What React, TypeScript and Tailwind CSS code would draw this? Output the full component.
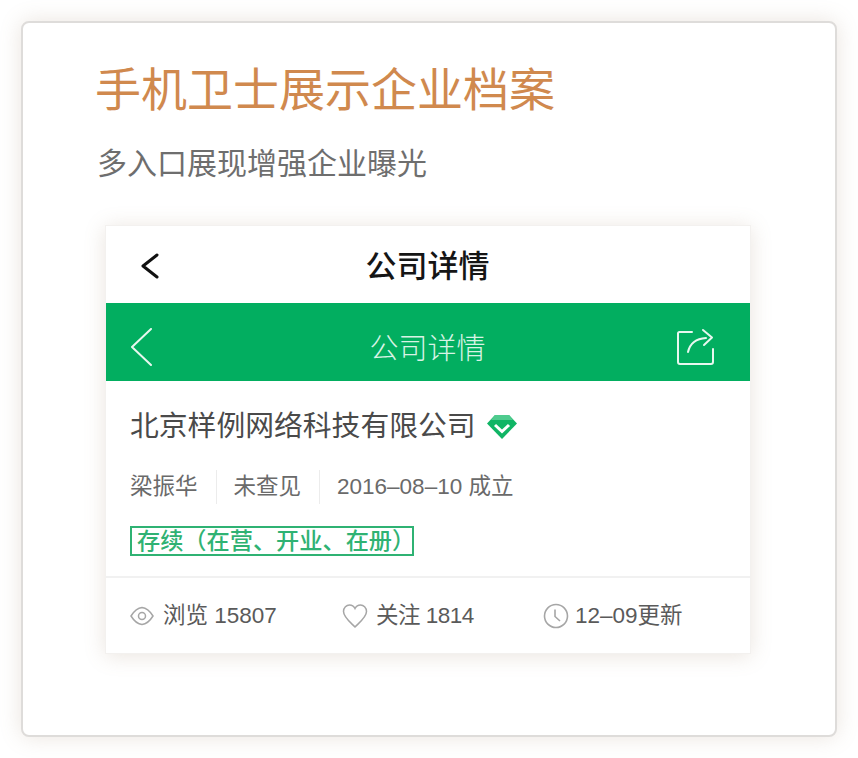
const cjk = "font-['Liberation_Sans','Noto_Sans_CJK_SC',sans-serif]";

function ShareIcon() {
  return (
    <svg width="40" height="38" viewBox="0 0 40 38" fill="none" stroke="#e8f7ef" strokeWidth="2" strokeLinecap="round" strokeLinejoin="round">
      <path d="M16 4H3.500Q2 4 2 5.500V34Q2 36 4 36H35Q37 36 37 34V21" />
      <path d="M12 24Q15 11 30 10" />
      <path d="M27 2L36 9.500L28 17" />
    </svg>
  );
}

function Diamond() {
  return (
    <svg width="32" height="26" viewBox="0 0 32 26">
      <path d="M9 1H23L31 9.500L16 25L1 9.500Z" fill="#10b565" />
      <path d="M9 11L16 17.500L23 11" fill="none" stroke="#fff" strokeWidth="3" />
      <path d="M9 1H23L27 6H5Z" fill="#4fcb8e" />
    </svg>
  );
}

function EyeIcon() {
  return (
    <svg width="24" height="20" viewBox="0 0 24 20" fill="none" stroke="#a6a6a6" strokeWidth="1.500">
      <path d="M1 10Q6 2 12 1.500Q18 2 23 10Q18 18 12 18.500Q6 18 1 10Z" />
      <circle cx="12" cy="10" r="3.500" />
    </svg>
  );
}

function HeartIcon() {
  return (
    <svg width="26" height="24" viewBox="0 0 26 24" fill="none" stroke="#a6a6a6" strokeWidth="1.500">
      <path d="M13 23C8 18 1.500 13 1.500 7.500C1.500 3.500 4.500 1 7.500 1C10 1 12 2.500 13 4.500C14 2.500 16 1 18.500 1C21.500 1 24.500 3.500 24.500 7.500C24.500 13 18 18 13 23Z" />
    </svg>
  );
}

function ClockIcon() {
  return (
    <svg width="26" height="26" viewBox="0 0 26 26" fill="none" stroke="#a6a6a6" strokeWidth="1.600">
      <circle cx="13" cy="13" r="11.500" />
      <path d="M12 6.500V13.500L17 18" />
    </svg>
  );
}

export default function App() {
  return (
    <div className={`w-[858px] h-[758px] p-[21px] bg-white ${cjk}`}>
      <div className="h-[716px] rounded-lg border-2 border-[#dedcda] bg-white shadow-[0_0_22px_rgba(150,120,90,0.2)] pl-[72px] pt-[40px]">
        <h1 className="text-[46px] leading-[54px] font-normal text-[#d0894e]">手机卫士展示企业档案</h1>
        <p className="text-[30px] leading-[36px] text-[#6e6e6e] mt-[29px] ml-[2px]">多入口展现增强企业曝光</p>

        <div className="w-[646px] h-[429px] ml-[10px] mt-[43px] flex flex-col bg-white border border-[#f3f1ef] shadow-[0_2px_20px_rgba(150,120,90,0.2)]">
          <div className="h-[77px] shrink-0 flex items-center relative justify-center pt-[6px]">
            <svg className="absolute left-[34px] top-[27px]" width="20" height="26" viewBox="0 0 20 26" fill="none" stroke="#111" strokeWidth="3" strokeLinecap="round" strokeLinejoin="round">
              <path d="M17 2L3 13L17 24" />
            </svg>
            <span className="text-[31px] font-medium text-[#151515] ml-[-1px]">公司详情</span>
          </div>

          <div className="h-[78px] shrink-0 bg-[#02ae60] flex items-center justify-center relative pt-[16px]">
            <svg className="absolute left-[24px] top-[25px]" width="24" height="38" viewBox="0 0 24 38" fill="none" stroke="#e8f7ef" strokeWidth="2" strokeLinecap="round" strokeLinejoin="round">
              <path d="M21 1L2 19L21 37" />
            </svg>
            <span className="text-[29px] font-light text-[#d8f3e5] ml-[-1px]">公司详情</span>
            <div className="absolute left-[570px] top-[25px]">
              <ShareIcon />
            </div>
          </div>

          <div className="flex-1 pl-[24px] pt-[26px]">
            <div className="flex items-center gap-[10px] h-[40px]">
              <span className="text-[28.800px] text-[#4a4a4a]">北京样例网络科技有限公司</span>
              <Diamond />
            </div>
            <div className="flex items-center mt-[24px] h-[32px] text-[22.500px] text-[#6a6a6a]">
              <span className="pr-[18px] border-r border-[#ececec]">梁振华</span>
              <span className="pl-[17px] pr-[18px] border-r border-[#ececec]">未查见</span>
              <span className="pl-[17px]">2016–08–10 成立</span>
            </div>
            <div className="w-[284px] h-[30px] mt-[23px] border-2 border-[#2fb273] pl-[5px] flex items-center text-[23.200px] font-medium text-[#2fb273] whitespace-nowrap">
              存续（在营、开业、在册）
            </div>
          </div>

          <div className="h-[77px] shrink-0 border-t-2 border-[#f1f1f1] flex items-center pl-[24px] text-[22.500px] text-[#5a5a5a]">
            <div className="flex items-center gap-[9px] w-[212px]">
              <EyeIcon />
              <span>浏览 15807</span>
            </div>
            <div className="flex items-center gap-[8px] w-[201px]">
              <HeartIcon />
              <span className="tracking-[-0.500px]">关注 1814</span>
            </div>
            <div className="flex items-center gap-[6px]">
              <ClockIcon />
              <span>12–09更新</span>
            </div>
          </div>
        </div>
      </div>
    </div>
  );
}
